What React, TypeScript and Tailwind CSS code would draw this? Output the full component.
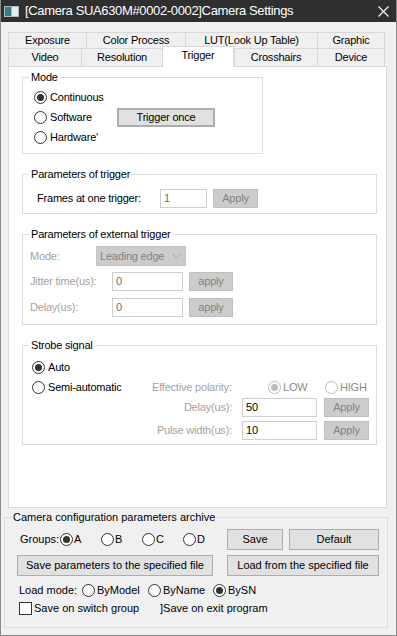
import type { ReactNode } from "react";
import clsx from "clsx";

const tabsTop = [
  { label: "Exposure", w: "w-[78px]" },
  { label: "Color Process", w: "w-[99px]" },
  { label: "LUT(Look Up Table)", w: "w-[132px]" },
  { label: "Graphic", w: "w-[68px]" },
];

const tabsBottom = [
  { label: "Video", w: "w-[73px]" },
  { label: "Resolution", w: "w-[81px]" },
  { label: "Trigger", w: "w-[72px]", active: true },
  { label: "Crosshairs", w: "w-[83px]" },
  { label: "Device", w: "w-[68px]" },
];

function Radio({ checked = false, disabled = false }: { checked?: boolean; disabled?: boolean }) {
  return (
    <span
      className={clsx(
        "flex h-[13px] w-[13px] shrink-0 items-center justify-center rounded-full border bg-white",
        disabled ? "border-[#bcbcbc]" : "border-[#333333]",
      )}
    >
      {checked && <span className={clsx("h-[7px] w-[7px] rounded-full", disabled ? "bg-[#bcbcbc]" : "bg-[#333333]")} />}
    </span>
  );
}

function Btn({ children, className, disabled }: { children: ReactNode; className?: string; disabled?: boolean }) {
  return (
    <button
      type="button"
      className={clsx(
        "flex shrink-0 items-center justify-center border",
        disabled ? "border-[#bfbfbf] bg-[#cccccc] text-[#838383]" : "border-[#adadad] bg-[#e1e1e1] text-black",
        className,
      )}
    >
      {children}
    </button>
  );
}

function Field({ value, className }: { value: string; className?: string }) {
  return (
    <div className={clsx("flex h-[19px] shrink-0 items-center border border-[#cfcfcf] bg-white px-[3px] text-[#6d6d6d]", className)}>
      {value}
    </div>
  );
}

function Group({ title, className, children }: { title: string; className?: string; children: ReactNode }) {
  return (
    <fieldset className={clsx("border border-[#dcdcdc]", className)}>
      <legend className="ml-[6px] px-[2px] leading-[14px]">{title}</legend>
      {children}
    </fieldset>
  );
}

export default function App() {
  return (
    <div className="flex h-[636px] w-[397px] flex-col border-x border-b border-[#8a8a8a] bg-[#f0f0f0] font-['Liberation_Sans',Arial,sans-serif] text-[11px] tracking-[-0.2px] text-black">
      {/* title bar */}
      <div className="flex h-[22px] shrink-0 items-center bg-[#2f2f2f] text-white">
        <svg className="ml-[3px]" width="15" height="11" viewBox="0 0 15 11">
          <rect x="0" y="0" width="15" height="11" fill="#aeb8bf" />
          <rect x="1" y="1" width="6" height="9" fill="#2f7f86" />
          <rect x="8" y="1" width="6" height="9" fill="#e6eef2" />
        </svg>
        <span className="ml-[6px] text-[13px] tracking-[-0.35px]">[Camera SUA630M#0002-0002]Camera Settings</span>
        <svg className="ml-auto mr-[7px]" width="11" height="11" viewBox="0 0 11 11">
          <path d="M0.5 0.5 L10.5 10.5 M10.5 0.5 L0.5 10.5" stroke="#ffffff" strokeWidth="1.1" />
        </svg>
      </div>

      {/* tabs + page */}
      <div className="pl-[7px] pt-[10px]">
        <div className="flex h-[16px]">
          {tabsTop.map((t, i) => (
            <div
              key={t.label}
              className={clsx(
                "flex items-center justify-center border-l border-t border-[#d9d9d9]",
                t.w,
                i === tabsTop.length - 1 && "border-r",
              )}
            >
              {t.label}
            </div>
          ))}
        </div>
        <div className="flex h-[18px] items-end">
          {tabsBottom.map((t, i) => (
            <div
              key={t.label}
              className={clsx(
                "flex items-center justify-center border-t border-[#d9d9d9]",
                t.w,
                t.active
                  ? "relative z-10 -mb-[1px] h-[21px] border-x bg-white pb-[3px]"
                  : "h-[18px] border-l",
                i === tabsBottom.length - 1 && "border-r",
              )}
            >
              {t.label}
            </div>
          ))}
        </div>

        <div className="h-[442px] w-[379px] border border-[#d9d9d9] bg-white pl-[13px] pt-[3px]">
          <Group title="Mode" className="w-[241px] pb-[5px] pt-[3px]">
            <div className="flex h-[20px] items-center gap-[3px] pl-[11px]">
              <Radio checked />
              <span>Continuous</span>
            </div>
            <div className="flex h-[20px] items-center pl-[11px]">
              <div className="flex w-[83px] items-center gap-[3px]">
                <Radio />
                <span>Software</span>
              </div>
              <Btn className="h-[19px] w-[98px] border-2 border-[#0078d7]">Trigger once</Btn>
            </div>
            <div className="flex h-[21px] items-center gap-[3px] pl-[11px]">
              <Radio />
              <span>Hardware'</span>
            </div>
          </Group>

          <Group title="Parameters of trigger" className="mt-[13px] w-[355px] pb-[5px] pt-[8px]">
            <div className="flex h-[19px] items-center pl-[14px]">
              <span className="w-[123px]">Frames at one trigger:</span>
              <Field value="1" className="w-[47px]" />
              <Btn disabled className="ml-[6px] h-[19px] w-[45px]">
                Apply
              </Btn>
            </div>
          </Group>

          <Group title="Parameters of external trigger" className="mt-[13px] w-[355px] pb-[7px] pt-[5px]">
            <div className="flex h-[20px] items-center pl-[7px] text-[#a3a3a3]">
              <span className="w-[66px]">Mode:</span>
              <div className="flex h-[20px] w-[90px] items-center justify-between border border-[#c4c4c4] bg-[#cccccc] pl-[3px] pr-[4px] text-[#838383]">
                <span>Leading edge</span>
                <svg width="9" height="6" viewBox="0 0 9 6">
                  <path d="M0.5 0.8 L4.5 4.8 L8.5 0.8" stroke="#a8a8a8" fill="none" />
                </svg>
              </div>
            </div>
            <div className="mt-[6px] flex h-[19px] items-center pl-[7px] text-[#a3a3a3]">
              <span className="w-[82px]">Jitter time(us):</span>
              <Field value="0" className="w-[71px]" />
              <Btn disabled className="ml-[6px] h-[19px] w-[44px]">
                apply
              </Btn>
            </div>
            <div className="mt-[7px] flex h-[19px] items-center pl-[7px] text-[#a3a3a3]">
              <span className="w-[82px]">Delay(us):</span>
              <Field value="0" className="w-[71px]" />
              <Btn disabled className="ml-[6px] h-[19px] w-[44px]">
                apply
              </Btn>
            </div>
          </Group>

          <Group title="Strobe signal" className="mt-[13px] w-[355px] pb-[4px] pt-[5px]">
            <div className="flex h-[20px] items-center gap-[3px] pl-[9px]">
              <Radio checked />
              <span>Auto</span>
            </div>
            <div className="flex h-[20px] items-center pl-[9px]">
              <div className="flex w-[120px] items-center gap-[3px]">
                <Radio />
                <span>Semi-automatic</span>
              </div>
              <span className="w-[116px] text-[#a3a3a3]">Effective polarity:</span>
              <div className="flex w-[57px] items-center gap-[2px] text-[#8a8a8a]">
                <Radio checked disabled />
                <span>LOW</span>
              </div>
              <div className="flex items-center gap-[2px] text-[#8a8a8a]">
                <Radio disabled />
                <span>HIGH</span>
              </div>
            </div>
            <div className="mt-[1px] flex h-[19px] items-center">
              <span className="w-[219px] pr-[10px] text-right text-[#a3a3a3]">Delay(us):</span>
              <Field value="50" className="w-[75px] text-black" />
              <Btn disabled className="ml-[7px] h-[19px] w-[45px]">
                Apply
              </Btn>
            </div>
            <div className="mt-[4px] flex h-[19px] items-center">
              <span className="w-[219px] pr-[10px] text-right text-[#a3a3a3]">Pulse width(us):</span>
              <Field value="10" className="w-[75px] text-black" />
              <Btn disabled className="ml-[7px] h-[19px] w-[45px]">
                Apply
              </Btn>
            </div>
          </Group>
        </div>
      </div>

      {/* archive */}
      <Group
        title="Camera configuration parameters archive"
        className="ml-[3px] mt-[2px] w-[384px] pb-[12px] pt-[5px] tracking-normal"
      >
        <div className="flex h-[21px] items-center">
          <span className="ml-[15px] w-[40px]">Groups:</span>
          {["A", "B", "C", "D"].map((g) => (
            <div key={g} className="flex w-[41px] items-center gap-[1px]">
              <Radio checked={g === "A"} />
              <span>{g}</span>
            </div>
          ))}
          <Btn className="ml-[3px] h-[21px] w-[56px]">Save</Btn>
          <Btn className="ml-[6px] h-[21px] w-[90px]">Default</Btn>
        </div>
        <div className="mt-[5px] flex h-[21px] items-center">
          <Btn className="ml-[12px] h-[21px] w-[196px]">Save parameters to the specified file</Btn>
          <Btn className="ml-[14px] h-[21px] w-[152px]">Load from the specified file</Btn>
        </div>
        <div className="mt-[6px] flex h-[16px] items-center">
          <span className="ml-[14px] w-[63px]">Load mode:</span>
          <div className="flex w-[66px] items-center gap-[2px]">
            <Radio />
            <span>ByModel</span>
          </div>
          <div className="flex w-[65px] items-center gap-[2px]">
            <Radio />
            <span>ByName</span>
          </div>
          <div className="flex items-center gap-[2px]">
            <Radio checked />
            <span>BySN</span>
          </div>
        </div>
        <div className="mt-[3px] flex h-[14px] items-center">
          <div className="ml-[14px] flex w-[141px] items-center gap-[2px]">
            <span className="h-[13px] w-[13px] shrink-0 border border-[#333333] bg-white" />
            <span>Save on switch group</span>
          </div>
          <span>]Save on exit program</span>
        </div>
      </Group>
    </div>
  );
}
